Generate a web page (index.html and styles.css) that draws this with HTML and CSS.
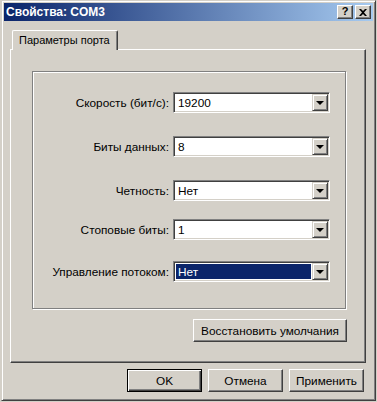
FILE: index.html
```html
<!DOCTYPE html>
<html lang="ru">
<head>
    <meta charset="UTF-8">
    <meta name="viewport" content="width=device-width, initial-scale=1.0">
    <title>Свойства: COM3</title>
    <link rel="stylesheet" href="styles.css">
</head>
<body>

    <div class="window">
        <!-- Title bar -->
        <div class="titlebar">
            <span class="title">Свойства: COM3</span>
            <div class="caption-buttons">
                <div class="caption-btn help">?</div>
                <div class="caption-btn close">
                    <svg width="8" height="7" viewBox="0 0 8 7">
                        <path d="M0 0h2l2 2 2-2h2L5 3.5 8 7H6L4 5 2 7H0l3-3.5z" fill="#000"/>
                    </svg>
                </div>
            </div>
        </div>

        <div class="dialog-body">
            <div class="tabs">
                <div class="tab active">Параметры порта</div>
            </div>

            <div class="tab-panel">
                <div class="groupbox">
                    <div class="row">
                        <label>Скорость (бит/с):</label>
                        <div class="combo"><span class="value">19200</span><span class="drop"><i></i></span></div>
                    </div>
                    <div class="row">
                        <label>Биты данных:</label>
                        <div class="combo"><span class="value">8</span><span class="drop"><i></i></span></div>
                    </div>
                    <div class="row">
                        <label>Четность:</label>
                        <div class="combo"><span class="value">Нет</span><span class="drop"><i></i></span></div>
                    </div>
                    <div class="row">
                        <label>Стоповые биты:</label>
                        <div class="combo"><span class="value">1</span><span class="drop"><i></i></span></div>
                    </div>
                    <div class="row">
                        <label>Управление потоком:</label>
                        <div class="combo"><span class="value selected">Нет</span><span class="drop"><i></i></span></div>
                    </div>
                </div>

                <div class="panel-actions">
                    <div class="btn restore">Восстановить умолчания</div>
                </div>
            </div>

            <div class="dialog-buttons">
                <div class="btn default">OK</div>
                <div class="btn">Отмена</div>
                <div class="btn">Применить</div>
            </div>
        </div>
    </div>

</body>
</html>
```

FILE: styles.css
```css
/* Basic Reset */
* {
    margin: 0;
    padding: 0;
    box-sizing: border-box;
}

body {
    font-family: "Liberation Sans", Arial, sans-serif;
    font-size: 11.8px;
    color: #000;
    background-color: #d4d0c8;
    overflow: hidden;
}

/* Classic window frame */
.window {
    width: 375px;
    height: 401px;
    margin-left: 1px;
    padding: 2px;
    background-color: #d4d0c8;
    border: 1px solid;
    border-color: #d4d0c8 #404040 #404040 #d4d0c8;
    box-shadow: inset 1px 1px #ffffff, inset -1px -1px #808080;
}

.titlebar {
    height: 18px;
    display: flex;
    align-items: center;
    justify-content: space-between;
    padding-left: 2px;
    background: linear-gradient(to right, #0a246a, #a6caf0);
}

.title {
    color: #ffffff;
    font-weight: bold;
    font-size: 12px;
}

.caption-buttons {
    display: flex;
    gap: 2px;
    margin-right: 2px;
}

.caption-btn {
    width: 16px;
    height: 14px;
    display: flex;
    align-items: center;
    justify-content: center;
    background-color: #d4d0c8;
    border: 1px solid;
    border-color: #ffffff #404040 #404040 #ffffff;
    box-shadow: inset -1px -1px #808080;
    font-weight: bold;
    font-size: 11px;
    line-height: 1;
}

.caption-btn.help {
    padding-bottom: 1px;
}

/* Dialog content */
.dialog-body {
    padding: 9px 7px 0 6px;
}

.tabs {
    display: flex;
    padding-left: 2px;
    position: relative;
    z-index: 1;
}

.tab {
    width: 106px;
    height: 20px;
    margin-bottom: -1px;
    padding: 3px 0 0 6px;
    font-size: 11px;
    white-space: nowrap;
    background-color: #d4d0c8;
    border-top: 1px solid #ffffff;
    border-left: 1px solid #ffffff;
    border-right: 1px solid #404040;
    border-radius: 2px 2px 0 0;
    box-shadow: inset -1px 0 #808080;
}

.tab-panel {
    height: 314px;
    border: 1px solid;
    border-color: #ffffff #404040 #404040 #ffffff;
    box-shadow: inset -1px -1px #808080;
}

.groupbox {
    width: 314px;
    height: 238px;
    margin: 21px 0 0 21px;
    padding-top: 20px;
    border: 1px solid #808080;
    box-shadow: inset 1px 1px #ffffff, 1px 1px #ffffff;
}

.row {
    display: grid;
    grid-template-columns: 136px 157px;
    column-gap: 4px;
    align-items: center;
    margin-top: 23px;
}

.row:first-child {
    margin-top: 0;
}

.row:nth-child(4) {
    margin-top: 18px;
}

.row:nth-child(5) {
    margin-top: 21px;
}

.row label {
    text-align: right;
}

.combo {
    height: 21px;
    display: flex;
    background-color: #ffffff;
    border: 1px solid;
    border-color: #808080 #ffffff #ffffff #808080;
    box-shadow: inset 1px 1px #404040, inset -1px -1px #d4d0c8;
    padding: 1px;
}

.combo .value {
    flex: 1;
    display: flex;
    align-items: center;
    padding-left: 2px;
    margin: 1px;
}

.combo .value.selected {
    background-color: #0a246a;
    color: #ffffff;
}

.combo .drop {
    width: 16px;
    display: flex;
    align-items: center;
    justify-content: center;
    background-color: #d4d0c8;
    border: 1px solid;
    border-color: #d4d0c8 #404040 #404040 #d4d0c8;
    box-shadow: inset 1px 1px #ffffff, inset -1px -1px #808080;
}

.combo .drop i {
    width: 0;
    height: 0;
    border-left: 4px solid transparent;
    border-right: 4px solid transparent;
    border-top: 4px solid #000000;
    margin-top: 1px;
}

/* Buttons */
.btn {
    width: 75px;
    height: 23px;
    display: flex;
    align-items: center;
    justify-content: center;
    background-color: #d4d0c8;
    border: 1px solid;
    border-color: #ffffff #404040 #404040 #ffffff;
    box-shadow: inset -1px -1px #808080;
}

.btn.default {
    border: 1px solid #000000;
    box-shadow: inset 1px 1px #ffffff, inset -1px -1px #404040, inset -2px -2px #808080;
}

.panel-actions {
    width: 315px;
    margin: 10px 0 0 21px;
    display: flex;
    justify-content: flex-end;
}

.btn.restore {
    width: 154px;
}

.dialog-buttons {
    display: flex;
    justify-content: flex-end;
    gap: 6px;
    margin-top: 6px;
    padding-right: 2px;
}
```
